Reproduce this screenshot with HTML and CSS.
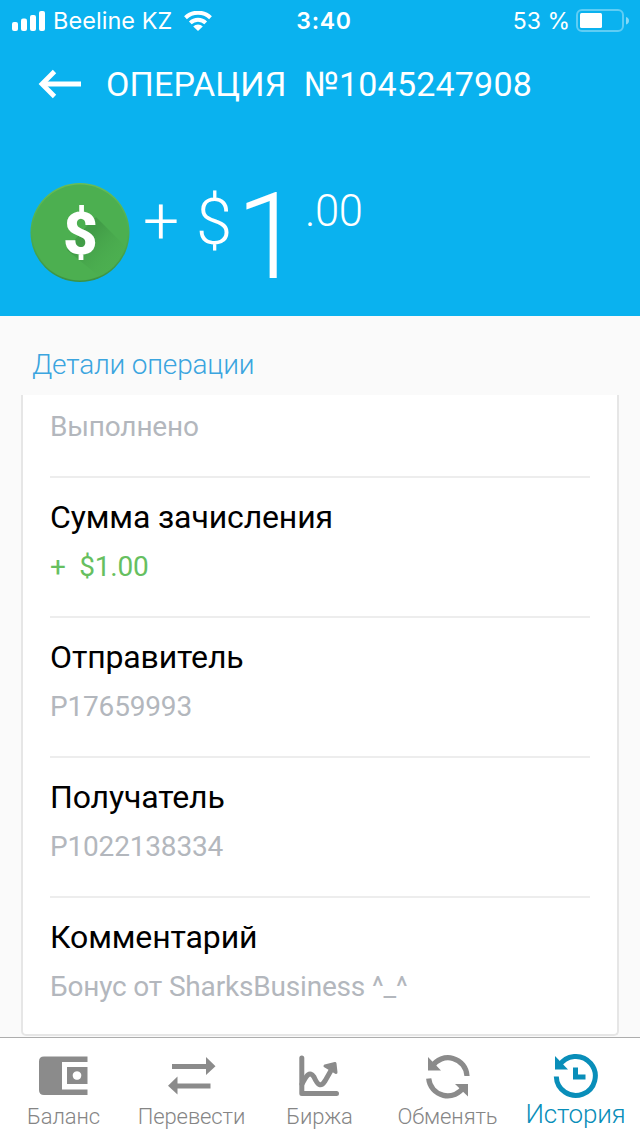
FILE: index.html
```html
<!DOCTYPE html>
<html lang="ru">
<head>
<meta charset="utf-8">
<title>Операция</title>
<link rel="stylesheet" href="styles.css">
</head>
<body>
<div class="screen">
  <header class="header">
    <div class="status">
      <div class="status-left">
        <svg class="signal" width="34" height="20" viewBox="0 0 34 20" fill="#fff"><rect x="0" y="11" width="6" height="9" rx="2"/><rect x="9" y="7.500" width="6" height="12.500" rx="2"/><rect x="18" y="4" width="6" height="16" rx="2"/><rect x="27" y="0" width="6" height="20" rx="2"/></svg>
        <span class="carrier">Beeline KZ</span>
        <svg class="wifi" width="28" height="21" viewBox="0 0 28 21" fill="none" stroke="#fff" stroke-width="4"><path d="M1.500 6.700a18 18 0 0 1 25 0"/><path d="M6.300 11.900a11.200 11.200 0 0 1 15.400 0"/><path d="M9.200 15.400a6.800 6.800 0 0 1 9.600 0L14 20z" fill="#fff" stroke="none"/></svg>
      </div>
      <span class="clock">3:40</span>
      <div class="status-right">
        <span class="percent">53 %</span>
        <svg width="54" height="24" viewBox="0 0 54 24"><rect x="1" y="1" width="46" height="21" rx="5" fill="none" stroke="#fff" stroke-opacity=".35" stroke-width="2"/><rect x="4" y="4" width="22" height="15" rx="1.500" fill="#fff"/><path d="M50 8q3 1 3 3.700T50 15.500z" fill="#fff" fill-opacity=".5"/></svg>
      </div>
    </div>
    <div class="title-row">
      <svg class="back" width="44" height="30" viewBox="0 0 44 30" fill="none" stroke="#fff" stroke-width="4.800"><path d="M43 15H5"/><path d="M16.500 2.500L4 15L16.500 27.500"/></svg>
      <h1 class="title">ОПЕРАЦИЯ&nbsp; №1045247908</h1>
    </div>
    <div class="amount">
      <svg class="coin" width="100" height="100" viewBox="0 0 100 100">
        <defs>
          <clipPath id="disc"><circle cx="50" cy="49.500" r="49"/></clipPath>
          <linearGradient id="shade" x1="0" y1="0" x2="1" y2="1"><stop offset=".3" stop-color="#2c7434" stop-opacity=".32"/><stop offset=".75" stop-color="#4caf50" stop-opacity="0"/></linearGradient>
          <linearGradient id="rim" x1="0" y1="0" x2="0" y2="1"><stop offset="0" stop-color="#69bd55"/><stop offset=".5" stop-color="#4caf50"/><stop offset="1" stop-color="#3b9143"/></linearGradient>
        </defs>
        <circle cx="50" cy="49.500" r="49.500" fill="url(#rim)"/>
        <circle cx="50" cy="49.500" r="48" fill="#4caf50"/>
        <path d="M66 34L102 70L82 104L37 67L50 50z" fill="url(#shade)" clip-path="url(#disc)"/>
        <text class="coin-sign" x="50.500" y="71" text-anchor="middle">$</text>
      </svg>
      <span class="plus">+</span>
      <span class="currency">$</span>
      <span class="whole">1</span>
      <span class="cents">.00</span>
    </div>
  </header>
  <main class="content">
    <h2 class="section">Детали операции</h2>
    <div class="card">
      <div class="row first"><div class="value">Выполнено</div></div>
      <div class="row"><div class="label">Сумма зачисления</div><div class="value green">+&nbsp; $1.00</div></div>
      <div class="row"><div class="label">Отправитель</div><div class="value">P17659993</div></div>
      <div class="row"><div class="label">Получатель</div><div class="value">P1022138334</div></div>
      <div class="row"><div class="label">Комментарий</div><div class="value">Бонус от SharksBusiness ^_^</div></div>
    </div>
  </main>
  <nav class="tabs">
    <div class="tab"><svg width="50" height="48" viewBox="0 0 50 48"><path fill="#8b8b8b" fill-rule="evenodd" d="M5 4.500H48.500V10H23V37.500H48.500V43H5Q0 43 0 38V9.500Q0 4.500 5 4.500zM28 15H48.500V32H28zM38 19.200a4.300 4.300 0 1 0 .01 0z"/></svg><span>Баланс</span></div>
    <div class="tab"><svg width="48" height="48" viewBox="0 0 48 48" fill="#8b8b8b"><path d="M4 12H38V5L47.500 14.200L38 23V17H4zM42.500 31.500H9.500V24.500L0 33.700L9.500 42.500V36.500H42.500z"/></svg><span>Перевести</span></div>
    <div class="tab"><svg width="42" height="48" viewBox="0 0 42 48" fill="none" stroke="#8b8b8b" stroke-width="5" stroke-linecap="round" stroke-linejoin="round"><path d="M2.800 6V41.500H37.500"/><path d="M3 32C7 25 10 18 15 25C19 34 22 35 26 29L34 15"/><path stroke-width="3" fill="#8b8b8b" d="M26 14L36 11.500L37 20.500z"/></svg><span>Биржа</span></div>
    <div class="tab"><svg width="44" height="48" viewBox="0 0 44 48" fill="none" stroke="#8b8b8b" stroke-width="5.200"><path d="M6 14.500A19 19 0 0 1 41 24"/><path d="M2.700 26.500A19 19 0 0 0 38 34.500"/><path fill="#8b8b8b" stroke="none" d="M2 5V18.500H15zM42 44.500V32H29z"/></svg><span>Обменять</span></div>
    <div class="tab active"><svg width="46" height="48" viewBox="0 0 46 48" fill="none" stroke="#098eb9" stroke-width="5"><path d="M6 15A19.500 19.500 0 1 1 3.300 25.500"/><path d="M22.500 16.500V26H32.500"/><path fill="#098eb9" stroke="none" d="M2 5V18.500H15z"/></svg><span>История</span></div>
  </nav>
</div>
</body>
</html>
```

FILE: styles.css
```css
* { box-sizing: border-box; }
body { margin: 0; font-family: Roboto, "Open Sans", sans-serif; background: #fafafa; }
.screen { width: 640px; height: 1136px; display: flex; flex-direction: column; overflow: hidden; }
svg { display: block; flex: none; }
.header { height: 316px; flex: none; background: #0ab2ef; color: #fff; }
.status { height: 40px; display: grid; grid-template-columns: 1fr auto 1fr; align-items: center; padding: 1px 10px 0 12px; font-family: Inter, "Liberation Sans", sans-serif; font-size: 23px; line-height: 40px; }
.status-left, .status-right { display: flex; align-items: center; }
.status-right { justify-content: flex-end; gap: 6px; }
.carrier { margin-left: 7px; font-size: 23.500px; letter-spacing: .05px; }
.wifi { margin-left: 12px; }
.clock { padding-left: 6px; font-weight: 600; letter-spacing: .7px; }
.title-row { display: flex; align-items: center; height: 88px; padding-left: 38px; }
.back { width: 44px; }
.title { margin: 0 0 0 24px; font-size: 34px; font-weight: 400; line-height: 40px; letter-spacing: .19px; white-space: pre; }
.amount { display: flex; align-items: flex-start; padding: 55px 0 0 30px; font-weight: 300; }
.coin-sign { font: 900 60px Roboto, sans-serif; fill: #fff; }
.plus { width: 66px; padding-left: 13px; line-height: 78px; font-size: 64px; }
.currency { width: 40px; line-height: 78px; font-size: 65px; }
.whole { width: 69px; line-height: 109px; font-size: 120px; }
.cents { line-height: 57px; font-size: 43.500px; letter-spacing: -.4px; }
.content { flex: 1; background: #fafafa; padding: 29px 21px 0; }
.section { margin: 0 0 10px 11px; font-size: 28px; font-weight: 300; line-height: 40px; letter-spacing: -.18px; color: #3ba5df; }
.card { height: 641px; padding: 0 27px; background: #fff; border: solid #e6e6e6; border-width: 0 2px 2px; border-radius: 0 0 5px 5px; }
.row { height: 140px; padding-top: 19px; border-bottom: 2px solid #ededed; }
.row.first { height: 83px; padding-top: 13px; }
.row:last-child { border-bottom: 0; }
.label { font-size: 32px; line-height: 40px; letter-spacing: -.13px; color: #000; }
.value { margin-top: 11px; font-size: 28px; line-height: 38px; letter-spacing: -.18px; color: #b3b7bd; }
.first .value { margin-top: 0; }
.value.green { color: #66bf60; }
.tabs { height: 99px; flex: none; display: grid; grid-template-columns: repeat(5, 128px); background: #fff; border-top: 1px solid #adadad; }
.tab { display: flex; flex-direction: column; align-items: center; padding-top: 14px; color: #858585; font-size: 22px; font-weight: 300; line-height: 34px; letter-spacing: -.1px; }
.tab span { margin-right: 1px; }
.active { padding-top: 13px; color: #098eb9; font-size: 26px; line-height: 31px; letter-spacing: -.2px; }
```
